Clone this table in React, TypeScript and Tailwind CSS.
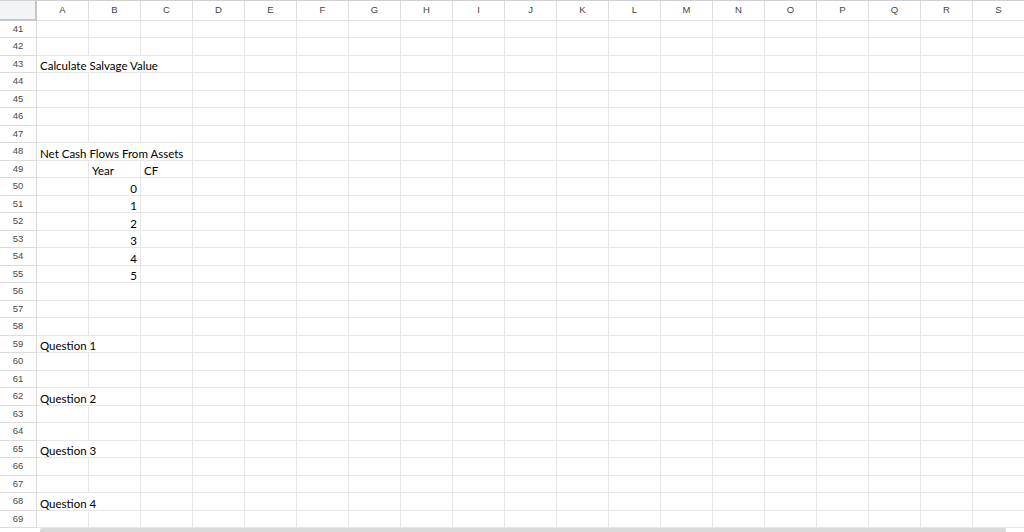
import React from 'react';

const columns = ['A', 'B', 'C', 'D', 'E', 'F', 'G', 'H', 'I', 'J', 'K', 'L', 'M', 'N', 'O', 'P', 'Q', 'R', 'S'];

// cell contents keyed by row, then column letter
const cells: Record<number, Record<string, { text: string; align?: 'left' | 'right' }>> = {
  43: { A: { text: 'Calculate Salvage Value' } },
  48: { A: { text: 'Net Cash Flows From Assets' } },
  49: { B: { text: 'Year' }, C: { text: 'CF' } },
  50: { B: { text: '0', align: 'right' } },
  51: { B: { text: '1', align: 'right' } },
  52: { B: { text: '2', align: 'right' } },
  53: { B: { text: '3', align: 'right' } },
  54: { B: { text: '4', align: 'right' } },
  55: { B: { text: '5', align: 'right' } },
  59: { A: { text: 'Question 1' } },
  62: { A: { text: 'Question 2' } },
  65: { A: { text: 'Question 3' } },
  68: { A: { text: 'Question 4' } },
};

const rows = Array.from({ length: 29 }, (_, i) => 41 + i);

const App: React.FC = () => {
  return (
    <div className="w-[1024px] h-[532px] overflow-hidden bg-white relative font-['Liberation_Sans',Arial,sans-serif]">
      {/* column headers */}
      <div className="flex h-[21px] border-t border-[#d0d0d0]">
        <div className="w-[37px] shrink-0 bg-[#f3f4f8] border-r-2 border-b-2 border-[#c6c6c6]" />
        {columns.map((c) => (
          <div
            key={c}
            className="w-[52px] shrink-0 flex items-center justify-center text-[9.5px] text-[#444] border-r border-b border-[#dedede]"
          >
            {c}
          </div>
        ))}
      </div>

      {/* rows */}
      {rows.map((r, i) => (
        <div key={r} className={`flex ${i % 2 === 0 ? 'h-[17px]' : 'h-[18px]'}`}>
          <div className="w-[37px] shrink-0 flex items-center justify-center text-[9.5px] text-[#4a4a4a] border-r border-b border-[#dcdcdc]">
            {r}
          </div>
          {columns.map((c) => {
            const cell = cells[r]?.[c];
            return (
              <div
                key={c}
                className="w-[52px] shrink-0 relative border-r border-b border-[#e6e6e6]"
              >
                {cell && (
                  <span
                    className={`absolute top-0 bottom-0 z-10 flex items-end pb-[1px] bg-white whitespace-nowrap font-['Lato',sans-serif] text-[11.5px] leading-none text-black ${
                      cell.align === 'right' ? 'right-[3px]' : 'left-[3px]'
                    }`}
                  >
                    {cell.text}
                  </span>
                )}
              </div>
            );
          })}
        </div>
      ))}

      {/* horizontal scrollbar */}
      <div className="absolute left-[40px] bottom-0 w-[966px] h-[4px] rounded-t-[2px] bg-[#dadada]" />
    </div>
  );
};

export default App;
